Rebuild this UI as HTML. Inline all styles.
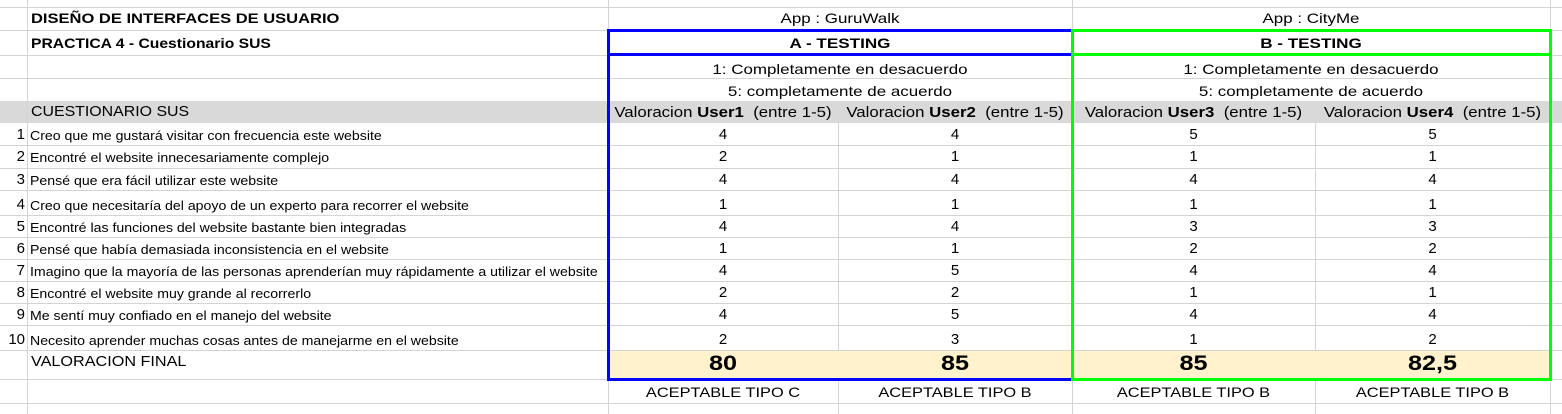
<!DOCTYPE html>
<html><head><meta charset="utf-8"><style>
*{margin:0;padding:0;box-sizing:border-box}
body{width:1562px;height:414px;overflow:hidden;background:#fff;font-family:"Liberation Sans",Arial,sans-serif;color:#000;position:relative}
.h{position:absolute;left:0;width:1562px;height:1px;background:#d4d4d4}
.v{position:absolute;width:1px;background:#d4d4d4}
.t{position:absolute;white-space:nowrap;font-size:15px;line-height:16px}
.c{text-align:center}
.b{font-weight:bold}
.q{font-size:12.5px;left:30px;transform:scaleX(1.13);transform-origin:left}
.n{font-size:15px;right:1537px;text-align:right}
.w{transform:scaleX(1.21);font-size:14px}
.w2{transform:scaleX(1.17);font-size:14px}
.vh{transform:scaleX(1.12);top:105px}
</style></head><body>
<div style="position:absolute;left:0;top:101px;width:1562px;height:22px;background:#d9d9d9"></div>
<div style="position:absolute;left:608px;top:351px;width:942px;height:28px;background:#fff2cc"></div>

<div class="h" style="top:7px"></div><div class="h" style="top:30px"></div><div class="h" style="top:55px"></div><div class="h" style="top:78px"></div>
<div class="h" style="top:145px"></div><div class="h" style="top:168px"></div><div class="h" style="top:190px"></div><div class="h" style="top:215px"></div><div class="h" style="top:237px"></div><div class="h" style="top:259px"></div><div class="h" style="top:281px"></div><div class="h" style="top:303px"></div><div class="h" style="top:325px"></div><div class="h" style="top:350px"></div><div class="h" style="top:379px"></div><div class="h" style="top:403px"></div>

<div class="v" style="left:27px;top:0;height:414px"></div>
<div class="v" style="left:608px;top:0;height:414px"></div>
<div class="v" style="left:1072px;top:0;height:414px"></div>
<div class="v" style="left:1550px;top:0;height:414px"></div>
<div class="v" style="left:838px;top:123px;height:228px"></div>
<div class="v" style="left:1315px;top:123px;height:228px"></div>
<div class="v" style="left:838px;top:379px;height:35px"></div>
<div class="v" style="left:1315px;top:379px;height:35px"></div>

<div style="position:absolute;left:607px;top:29px;width:467px;height:352px;border:3px solid #0000ff"></div>
<div style="position:absolute;left:607px;top:53px;width:467px;height:3px;background:#0000ff"></div>
<div style="position:absolute;left:1071px;top:29px;width:481px;height:352px;border:3px solid #00ff00"></div>
<div style="position:absolute;left:1071px;top:53px;width:481px;height:3px;background:#00ff00"></div>

<div class="t b" style="left:31px;top:10px;font-size:14px;transform:scaleX(1.18);transform-origin:left">DISEÑO DE INTERFACES DE USUARIO</div>
<div class="t b" style="left:31px;top:35px;font-size:14px;transform:scaleX(1.12);transform-origin:left">PRACTICA 4 - Cuestionario SUS</div>
<div class="t c w" style="left:608px;width:464px;top:10px">App : GuruWalk</div>
<div class="t c w" style="left:1072px;width:478px;top:10px">App : CityMe</div>
<div class="t c b" style="left:608px;width:464px;top:35px;font-size:14px;transform:scaleX(1.22)">A - TESTING</div>
<div class="t c b" style="left:1072px;width:478px;top:35px;font-size:14px;transform:scaleX(1.22)">B - TESTING</div>
<div class="t c w" style="left:608px;width:464px;top:61px">1: Completamente en desacuerdo</div>
<div class="t c w" style="left:1072px;width:478px;top:61px">1: Completamente en desacuerdo</div>
<div class="t c w" style="left:608px;width:464px;top:83px">5: completamente de acuerdo</div>
<div class="t c w" style="left:1072px;width:478px;top:83px">5: completamente de acuerdo</div>
<div class="t" style="left:31px;top:104px;font-size:15px;transform:scaleX(1.06);transform-origin:left">CUESTIONARIO SUS</div>
<div class="t c vh" style="left:608px;width:230px">Valoracion <b>User1</b>&nbsp; (entre 1-5)</div>
<div class="t c vh" style="left:838px;width:234px">Valoracion <b>User2</b>&nbsp; (entre 1-5)</div>
<div class="t c vh" style="left:1072px;width:243px">Valoracion <b>User3</b>&nbsp; (entre 1-5)</div>
<div class="t c vh" style="left:1315px;width:235px">Valoracion <b>User4</b>&nbsp; (entre 1-5)</div>

<div class="t n" style="top:127px">1</div><div class="t q" style="top:128px">Creo que me gustará visitar con frecuencia este website</div>
<div class="t n" style="top:149px">2</div><div class="t q" style="top:150px">Encontré el website innecesariamente complejo</div>
<div class="t n" style="top:172px">3</div><div class="t q" style="top:173px">Pensé que era fácil utilizar este website</div>
<div class="t n" style="top:197px">4</div><div class="t q" style="top:198px">Creo que necesitaría del apoyo de un experto para recorrer el website</div>
<div class="t n" style="top:219px">5</div><div class="t q" style="top:220px">Encontré las funciones del website bastante bien integradas</div>
<div class="t n" style="top:241px">6</div><div class="t q" style="top:242px">Pensé que había demasiada inconsistencia en el website</div>
<div class="t n" style="top:263px">7</div><div class="t q" style="top:264px">Imagino que la mayoría de las personas aprenderían muy rápidamente a utilizar el website</div>
<div class="t n" style="top:285px">8</div><div class="t q" style="top:286px">Encontré el website muy grande al recorrerlo</div>
<div class="t n" style="top:307px">9</div><div class="t q" style="top:308px">Me sentí muy confiado en el manejo del website</div>
<div class="t n" style="top:332px">10</div><div class="t q" style="top:333px">Necesito aprender muchas cosas antes de manejarme en el website</div>
<div class="t" style="left:31px;top:354px;font-size:15px;transform:scaleX(1.08);transform-origin:left">VALORACION FINAL</div>

<div class="t c" style="left:608px;width:230px;top:127px">4</div>
<div class="t c" style="left:608px;width:230px;top:149px">2</div>
<div class="t c" style="left:608px;width:230px;top:172px">4</div>
<div class="t c" style="left:608px;width:230px;top:197px">1</div>
<div class="t c" style="left:608px;width:230px;top:219px">4</div>
<div class="t c" style="left:608px;width:230px;top:241px">1</div>
<div class="t c" style="left:608px;width:230px;top:263px">4</div>
<div class="t c" style="left:608px;width:230px;top:285px">2</div>
<div class="t c" style="left:608px;width:230px;top:307px">4</div>
<div class="t c" style="left:608px;width:230px;top:332px">2</div>

<div class="t c" style="left:838px;width:234px;top:127px">4</div>
<div class="t c" style="left:838px;width:234px;top:149px">1</div>
<div class="t c" style="left:838px;width:234px;top:172px">4</div>
<div class="t c" style="left:838px;width:234px;top:197px">1</div>
<div class="t c" style="left:838px;width:234px;top:219px">4</div>
<div class="t c" style="left:838px;width:234px;top:241px">1</div>
<div class="t c" style="left:838px;width:234px;top:263px">5</div>
<div class="t c" style="left:838px;width:234px;top:285px">2</div>
<div class="t c" style="left:838px;width:234px;top:307px">5</div>
<div class="t c" style="left:838px;width:234px;top:332px">3</div>

<div class="t c" style="left:1072px;width:243px;top:127px">5</div>
<div class="t c" style="left:1072px;width:243px;top:149px">1</div>
<div class="t c" style="left:1072px;width:243px;top:172px">4</div>
<div class="t c" style="left:1072px;width:243px;top:197px">1</div>
<div class="t c" style="left:1072px;width:243px;top:219px">3</div>
<div class="t c" style="left:1072px;width:243px;top:241px">2</div>
<div class="t c" style="left:1072px;width:243px;top:263px">4</div>
<div class="t c" style="left:1072px;width:243px;top:285px">1</div>
<div class="t c" style="left:1072px;width:243px;top:307px">4</div>
<div class="t c" style="left:1072px;width:243px;top:332px">1</div>

<div class="t c" style="left:1315px;width:235px;top:127px">5</div>
<div class="t c" style="left:1315px;width:235px;top:149px">1</div>
<div class="t c" style="left:1315px;width:235px;top:172px">4</div>
<div class="t c" style="left:1315px;width:235px;top:197px">1</div>
<div class="t c" style="left:1315px;width:235px;top:219px">3</div>
<div class="t c" style="left:1315px;width:235px;top:241px">2</div>
<div class="t c" style="left:1315px;width:235px;top:263px">4</div>
<div class="t c" style="left:1315px;width:235px;top:285px">1</div>
<div class="t c" style="left:1315px;width:235px;top:307px">4</div>
<div class="t c" style="left:1315px;width:235px;top:332px">2</div>

<div class="t c b" style="left:608px;width:230px;top:352px;font-size:21px;line-height:24px;transform:scaleX(1.2)">80</div>
<div class="t c b" style="left:838px;width:234px;top:352px;font-size:21px;line-height:24px;transform:scaleX(1.2)">85</div>
<div class="t c b" style="left:1072px;width:243px;top:352px;font-size:21px;line-height:24px;transform:scaleX(1.2)">85</div>
<div class="t c b" style="left:1315px;width:235px;top:352px;font-size:21px;line-height:24px;transform:scaleX(1.2)">82,5</div>

<div class="t c w2" style="left:608px;width:230px;top:384px">ACEPTABLE TIPO C</div>
<div class="t c w2" style="left:838px;width:234px;top:384px">ACEPTABLE TIPO B</div>
<div class="t c w2" style="left:1072px;width:243px;top:384px">ACEPTABLE TIPO B</div>
<div class="t c w2" style="left:1315px;width:235px;top:384px">ACEPTABLE TIPO B</div>
</body></html>
